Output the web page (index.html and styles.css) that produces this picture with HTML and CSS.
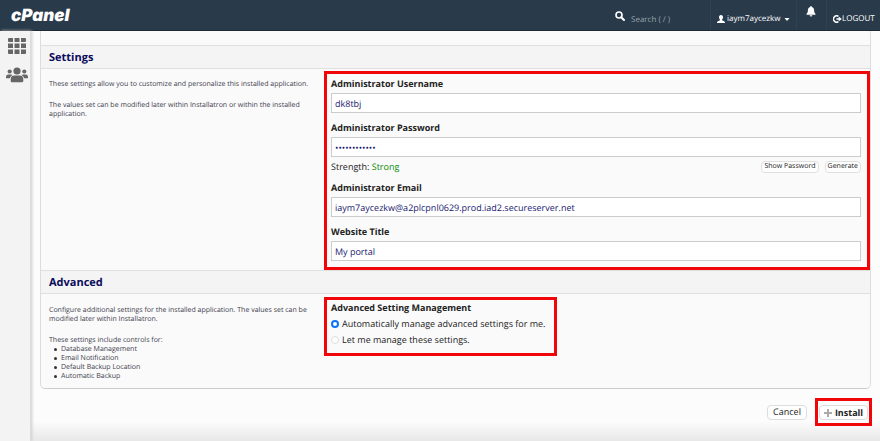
FILE: index.html
```html
<!DOCTYPE html>
<html lang="en">
<head>
<meta charset="utf-8">
<meta name="viewport" content="width=device-width, initial-scale=1">
<title>cPanel - Install application</title>
<link rel="stylesheet" href="styles.css">
</head>
<body>
<header class="topbar">
  <a class="logo" href="#">cPanel</a>
  <div class="search">
    <svg class="search-icon" viewBox="0 0 10 10" aria-hidden="true"><circle cx="4" cy="4" r="3" fill="none" stroke="#fff" stroke-width="1.6"/><path d="M6.2 6.2 9 9" stroke="#fff" stroke-width="2" stroke-linecap="round"/></svg>
    <input class="search-input" type="search" aria-label="Search" placeholder="Search ( / )">
  </div>
  <button class="nav-item user" type="button">
    <svg class="user-icon" viewBox="0 0 8 8" aria-hidden="true"><path d="M4 0C5.4 0 6.1 1 6 2.400 5.900 3.500 5.500 4.100 5 4.600V5.300L7.200 6.200Q8 6.600 8 8H0Q0 6.600.800 6.200L3 5.300V4.600C2.500 4.100 2.100 3.500 2 2.400 1.900 1 2.600 0 4 0Z" fill="#fff"/></svg>
    <span>iaym7aycezkw</span>
    <svg class="caret" viewBox="0 0 6 3" aria-hidden="true"><path d="M.500 0h5L3 3Z" fill="#fff"/></svg>
  </button>
  <button class="nav-item bell" type="button" aria-label="Notifications">
    <svg class="bell-icon" viewBox="0 0 10 11" aria-hidden="true"><path d="M5 0Q5.800 0 5.800 1C7.500 1.400 8.100 2.800 8.100 4.300 8.100 6.300 8.700 7.200 9.500 8V8.800H.500V8C1.300 7.200 1.900 6.300 1.900 4.300 1.900 2.800 2.500 1.400 4.200 1Q4.200 0 5 0ZM3.500 9.300h3Q6.200 10.600 5 10.600 3.800 10.600 3.500 9.300Z" fill="#fff"/></svg>
  </button>
  <a class="nav-item logout" href="#">
    <svg class="logout-icon" viewBox="0 0 9 8" aria-hidden="true"><path d="M5.400 1.300A3.200 3.200 0 1 0 5.400 6.700" fill="none" stroke="#fff" stroke-width="1.500"/><path d="M3.400 3.300h2.300V1.600L8.800 4 5.700 6.400V4.800H3.400Z" fill="#fff"/></svg>
    <span>LOGOUT</span>
  </a>
</header>

<div class="layout">
  <nav class="sidebar" aria-label="Main">
    <a href="#" aria-label="Tools"><svg class="grid-icon" viewBox="0 0 18 16" aria-hidden="true"><path d="M1 0h4v4H1a1 1 0 0 1-1-1V1a1 1 0 0 1 1-1ZM6.500 0h5v4h-5ZM13 0h4a1 1 0 0 1 1 1v2a1 1 0 0 1-1 1h-4ZM0 5.500h5v4.500H0ZM6.500 5.500h5v4.500h-5ZM13 5.500h5v4.500h-5ZM0 11.500h5V16H1a1 1 0 0 1-1-1ZM6.500 11.500h5V16h-5ZM13 11.500h5V15a1 1 0 0 1-1 1h-4Z" fill="#666"/></svg></a>
    <a href="#" aria-label="User Manager"><svg class="users-icon" viewBox="0 0 22 16" aria-hidden="true"><g fill="#666"><circle cx="11" cy="4" r="3.600"/><circle cx="3.700" cy="4.500" r="2.100"/><circle cx="18.300" cy="4.500" r="2.100"/><path d="M8.200 8.500h5.600Q17.300 8.700 17.300 12.500V14q0 1.200-1.200 1.200H5.900q-1.200 0-1.200-1.200V12.500Q4.700 8.700 8.200 8.500ZM2.300 7.500h2.800q.900 0 1.300.500Q4.200 9.300 3.900 11.300H0V9.700Q.200 7.500 2.300 7.500ZM19.700 7.500h-2.800q-.900 0-1.300.500 2.200 1.300 2.500 3.300H22V9.700Q21.800 7.500 19.700 7.500Z"/></g></svg></a>
  </nav>

  <main class="content">
    <form class="install-form">
      <div class="panel">
        <section>
          <h2 class="section-title">Settings</h2>
          <div class="section-body">
            <div class="description">
              <p>These settings allow you to customize and personalize this installed application.</p>
              <p>The values set can be modified later within Installatron or within the installed application.</p>
            </div>
            <div class="fields highlight">
              <div class="field">
                <label for="username">Administrator Username</label>
                <input class="text-input" id="username" type="text" value="dk8tbj">
              </div>
              <div class="field">
                <label for="password">Administrator Password</label>
                <input class="text-input" id="password" type="password" value="abcdefghijkl">
                <div class="strength">
                  <span>Strength: <span class="strong">Strong</span></span>
                  <button class="mini-button show" type="button">Show Password</button>
                  <button class="mini-button" type="button">Generate</button>
                </div>
              </div>
              <div class="field">
                <label for="email">Administrator Email</label>
                <input class="text-input" id="email" type="text" value="iaym7aycezkw@a2plcpnl0629.prod.iad2.secureserver.net">
              </div>
              <div class="field">
                <label for="title">Website Title</label>
                <input class="text-input" id="title" type="text" value="My portal">
              </div>
            </div>
          </div>
        </section>
        <section>
          <h2 class="section-title">Advanced</h2>
          <div class="section-body advanced">
            <div class="description">
              <p>Configure additional settings for the installed application. The values set can be modified later within Installatron.</p>
              <p>These settings include controls for:</p>
              <ul>
                <li>Database Management</li>
                <li>Email Notification</li>
                <li>Default Backup Location</li>
                <li>Automatic Backup</li>
              </ul>
            </div>
            <fieldset class="options highlight">
              <legend>Advanced Setting Management</legend>
              <label class="option"><input type="radio" name="manage" checked><span>Automatically manage advanced settings for me.</span></label>
              <label class="option"><input type="radio" name="manage"><span>Let me manage these settings.</span></label>
            </fieldset>
          </div>
        </section>
      </div>
      <div class="actions">
        <button class="button" type="button">Cancel</button>
        <div class="highlight install-box">
          <button class="button primary" type="submit"><svg class="plus" viewBox="0 0 8 8" aria-hidden="true"><path d="M4 0v8M0 4h8" stroke="#aaa" stroke-width="2"/></svg>Install</button>
        </div>
      </div>
    </form>
  </main>
</div>
</body>
</html>
```
FILE: styles.css
```css
* {
  box-sizing: border-box;
}

body {
  margin: 0;
  min-height: 100vh;
  display: flex;
  flex-direction: column;
  background: #fcfcfc;
  color: #222;
  font: 9px/12px "Open Sans", "Noto Sans", sans-serif;
  text-rendering: geometricPrecision;
}

button,
input {
  font: inherit;
  color: inherit;
  text-rendering: inherit;
}

svg {
  display: block;
}

.topbar {
  display: flex;
  height: 31px;
  background: #293a4a;
  border-bottom: 1px solid #1d2a36;
  color: #fff;
}

.logo {
  margin-left: 11px;
  font: italic 900 17px/32px Inter, "Open Sans", sans-serif;
  color: #fff;
  text-decoration: none;
}

.search {
  flex: 1;
  display: flex;
  justify-content: flex-end;
  gap: 6px;
  padding-top: 11px;
}

.search-icon {
  width: 10px;
  height: 10px;
}

.search-input {
  width: 79px;
  height: 17px;
  padding: 0;
  border: 0;
  outline: 0;
  background: none;
  font-size: 8px;
}

.search-input::placeholder {
  color: #9aa3ab;
  opacity: 1;
}

.nav-item {
  display: flex;
  align-items: center;
  padding: 8px 0 0;
  border: 0;
  border-left: 1px solid #2f4253;
  background: none;
  font-size: 8px;
  color: #fff;
  text-decoration: none;
}

.user {
  width: 86px;
  padding-left: 6px;
  gap: 2px;
}

.user-icon {
  width: 8px;
  height: 8px;
}

.caret {
  width: 6px;
  height: 3px;
  margin: 0 6px 0 auto;
}

.bell {
  width: 30px;
  justify-content: center;
  align-items: flex-start;
  padding: 6px 2px 0 0;
}

.bell-icon {
  width: 10px;
  height: 11px;
}

.logout {
  width: 54px;
  padding-left: 6px;
}

.logout-icon {
  width: 9px;
  height: 8px;
}

.layout {
  flex: 1;
  display: flex;
}

.sidebar {
  width: 31px;
  padding-top: 7px;
  display: flex;
  flex-direction: column;
  align-items: flex-start;
  gap: 13px;
  background: #f3f3f3;
  border-right: 1px solid #ddd;
  box-shadow: 1px 0 3px #ccc;
  z-index: 1;
}

.sidebar a {
  padding-left: 6px;
}

.grid-icon {
  width: 22px;
  height: 16px;
}

.users-icon {
  width: 22px;
  height: 16px;
}

.content {
  flex: 1;
  min-width: 0;
  padding: 0 9px;
  background: linear-gradient(to top, #e8e8e8, #fcfcfc 20px);
}

.panel {
  padding-top: 14px;
  border: 1px solid #ddd;
  border-top: 0;
  border-bottom-color: #ccc;
  border-radius: 0 0 5px 5px;
  background: #fafafa;
}

.section-title {
  margin: 0;
  padding: 0 8px;
  height: 24px;
  border: 1px solid #e0e0e0;
  border-width: 1px 0;
  background: #f4f4f4;
  font-size: 11px;
  font-weight: 700;
  line-height: 23px;
  color: #0b0b5c;
}

.section-body {
  display: grid;
  grid-template-columns: 283px 1fr;
  padding-top: 2px;
}

.description {
  padding: 9px 4px 0 8px;
  font-size: 7px;
  line-height: 9px;
  color: #3d3d4d;
}

.description p {
  margin: 0 0 12px;
}

.description ul {
  margin: -12px 0 0;
  padding-left: 5px;
  list-style: none;
}

.description li {
  display: flex;
  align-items: center;
  gap: 4px;
}

.description li::before {
  content: "";
  width: 3px;
  height: 3px;
  border-radius: 50%;
  background: #333;
}

.highlight {
  border: 3px solid #f00508;
}

.fields {
  display: flex;
  flex-direction: column;
  gap: 9px;
  padding: 4px 6px 6px 4px;
}

.field label {
  display: block;
  padding-bottom: 3px;
  font-weight: 700;
}

.text-input {
  display: block;
  width: 100%;
  height: 20px;
  padding: 0 3px;
  border: 1px solid #ccc;
  border-radius: 0;
  background: #fff;
  color: #191970;
}

.strength {
  display: flex;
  align-items: center;
  height: 16px;
  padding-top: 4px;
}

.strong {
  color: #0a8a0a;
}

.mini-button {
  height: 12px;
  padding: 0 2px;
  border: 1px solid #e0e0e0;
  border-radius: 4px;
  background: #fefefe;
  font-size: 7px;
  line-height: 10px;
}

.show {
  margin: 0 6px 0 auto;
}

.advanced {
  padding: 3px 0 7px;
}

.options {
  justify-self: start;
  align-self: start;
  width: 233px;
  margin: 0;
  padding: 2px 4px 5px;
}

.options legend {
  float: left;
  width: 100%;
  padding: 0 0 2px;
  font-weight: 700;
}

.option {
  clear: both;
  display: flex;
  align-items: center;
  gap: 3px;
  height: 16px;
}

.option input {
  appearance: none;
  width: 8px;
  height: 8px;
  margin: 0;
  border: 1px solid #ddd;
  border-radius: 50%;
  background: #fff;
}

.option input:checked {
  border: 2px solid #0a74f5;
}

.actions {
  display: flex;
  justify-content: flex-end;
  align-items: center;
  gap: 8px;
  margin-right: -1px;
  padding-top: 9px;
}

.button {
  display: flex;
  align-items: center;
  justify-content: center;
  height: 15px;
  width: 40px;
  padding: 0;
  border: 1px solid #ddd;
  border-radius: 4px;
  background: #fefefe;
}

.install-box {
  padding: 4px 1px 3px;
}

.primary {
  width: 49px;
  gap: 3px;
  font-weight: 700;
}

.plus {
  width: 8px;
  height: 8px;
}
```
